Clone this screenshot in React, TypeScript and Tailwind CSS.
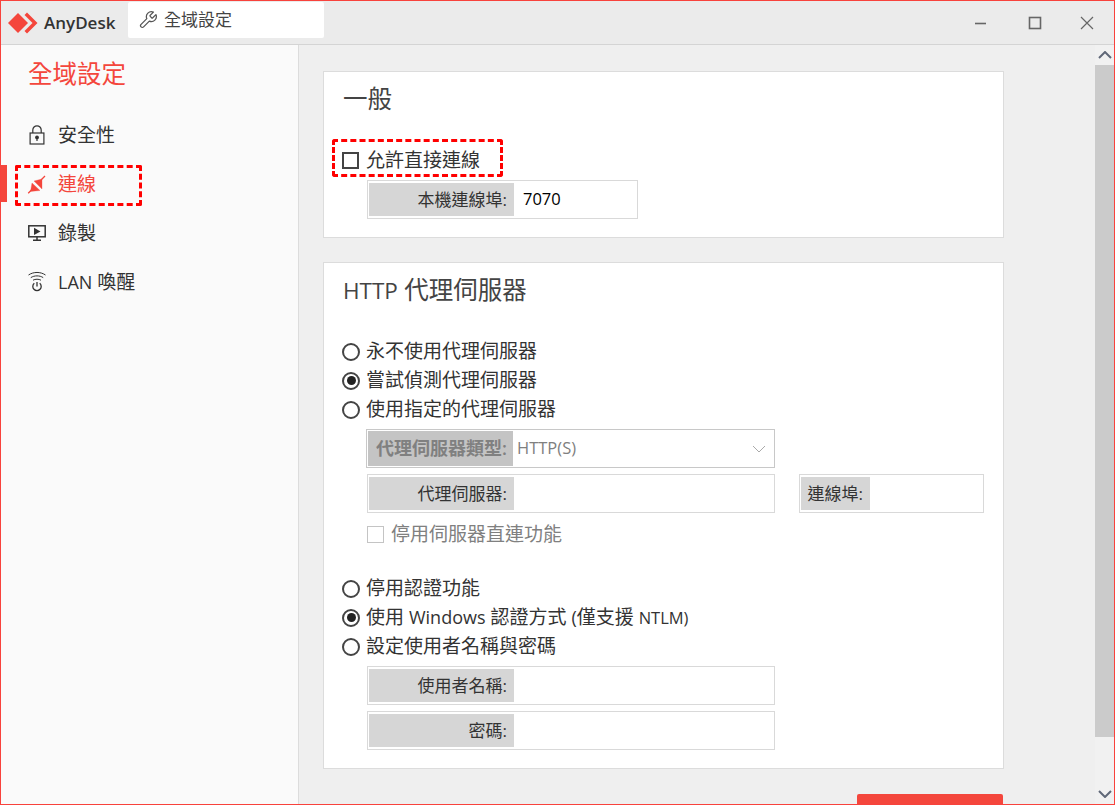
import React from "react";

const font = { fontFamily: '"Open Sans","Noto Sans CJK TC",sans-serif' };

function Latin({ children }: { children: React.ReactNode }) {
  return <span className="text-[18px]">{children}</span>;
}

function Field({ label, value, width, labelW = "w-[145px]" }: { label: string; value?: string; width: string; labelW?: string }) {
  return (
    <div className={`flex h-[39px] items-stretch border border-[#d9d9d9] bg-white py-[2px] pl-[1px] pr-[2px] ${width}`}>
      <div className={`flex shrink-0 items-center justify-end bg-[#d6d6d6] pr-[7px] text-[17px] text-[#333] ${labelW}`}>{label}</div>
      {value && <div className="flex items-center pl-[9px] text-[16.5px] text-black">{value}</div>}
    </div>
  );
}

function Radio({ children, checked }: { children: React.ReactNode; checked?: boolean }) {
  return (
    <div className="flex h-[29px] items-center text-[#333]">
      <span className="-ml-[1px] flex h-[18px] w-[18px] items-center justify-center rounded-full border-2 border-[#444] bg-white">
        {checked && <span className="h-[9px] w-[9px] rounded-full bg-[#222]" />}
      </span>
      <span className="ml-[6px] whitespace-nowrap">{children}</span>
    </div>
  );
}

function NavItem({ icon, children, active }: { icon: React.ReactNode; children: React.ReactNode; active?: boolean }) {
  return (
    <div className={`flex h-[49px] items-center pl-[26px] ${active ? "text-[#f4463c]" : "text-[#333]"}`}>
      <span className="flex w-[20px] items-center justify-center">{icon}</span>
      <span className="ml-[11px] mt-[2px] whitespace-nowrap">{children}</span>
    </div>
  );
}

const Lock = (
  <svg width="16" height="20" viewBox="0 0 16 20" fill="none" stroke="#333" strokeWidth="1.2">
    <rect x="1.1" y="8" width="13.8" height="11" />
    <path d="M3.8 8V5a4.2 4.2 0 0 1 8.4 0v3" />
    <circle cx="8" cy="12.4" r="1.3" fill="#333" />
    <path d="M8 13v3" />
  </svg>
);
const Plug = (
  <svg width="20" height="20" viewBox="0 0 20 20" fill="#f4463c" stroke="#f4463c" strokeWidth="0.3">
    <path d="M5 9l8 7.5-9.5 1z" />
    <path d="M7 7l8 8 0-10z" />
    <path d="M1.2 19.2l3.5-3.5M14 6l4-4" strokeWidth="1.3" fill="none" />
  </svg>
);
const Screen = (
  <svg width="18" height="18" viewBox="0 0 18 18" fill="none" stroke="#333" strokeWidth="1.5">
    <rect x="0.8" y="1.8" width="16.4" height="11" />
    <path d="M6 3.8l6.5 3.6L6 11z" fill="#333" stroke="none" />
    <path d="M9 13v3M5 16.2h8" />
  </svg>
);
const Wake = (
  <svg width="20" height="21" viewBox="0 0 20 21" fill="none" stroke="#333" strokeWidth="1">
    <path d="M1.5 4c5-3.4 12-3.4 17 0" />
    <path d="M3.8 6.6c3.6-2.3 8.8-2.3 12.4 0" />
    <path d="M6 9.2c2.3-1.3 5.7-1.3 8 0" />
    <path d="M7.3 12.2a4.2 4.2 0 1 0 5.4 0" strokeWidth="1.3" />
    <path d="M10 11v4.5" strokeWidth="1.3" />
  </svg>
);

export default function App() {
  return (
    <div style={font} className="flex h-[805px] w-[1115px] flex-col overflow-hidden border border-[#f8423c] bg-[#efefef] text-[19px]">
      <header className="flex h-[44px] shrink-0 items-center border-b border-[#d4d4d4] bg-[#ebebeb]">
        <svg className="ml-[7px]" width="30" height="22" viewBox="0 0 30 22" fill="#f4463c">
          <path d="M0 11L10 1l10 10-10 10z" />
          <path d="M19 0.5L29.5 11 19 21.5 16.5 19l8-8-8-8z" />
        </svg>
        <span className="ml-[6px] w-[84px] text-[17px] font-semibold text-[#333]">AnyDesk</span>
        <div className="mb-[5px] flex h-[36px] w-[196px] items-center rounded-[2px] bg-white pl-[10px]">
          <svg width="20" height="20" viewBox="0 0 24 24" fill="none" stroke="#555" strokeWidth="1.5" strokeLinejoin="round">
            <path d="M14.7 6.3a1 1 0 0 0 0 1.4l1.6 1.6a1 1 0 0 0 1.4 0l3.8-3.8a6 6 0 0 1-7.9 7.9l-6.9 6.9a2.1 2.1 0 0 1-3-3l6.9-6.9a6 6 0 0 1 7.9-7.9z" />
          </svg>
          <span className="ml-[6px] text-[17px] text-[#444]">全域設定</span>
        </div>
        <div className="ml-auto flex items-center text-[#666]">
          <svg width="14" height="14" viewBox="0 0 14 14" stroke="#666" strokeWidth="1.6"><path d="M1 7.5h11" /></svg>
          <svg className="ml-[40px]" width="14" height="14" viewBox="0 0 14 14" fill="none" stroke="#666" strokeWidth="1.6"><rect x="1.5" y="1.5" width="11" height="11" /></svg>
          <svg className="ml-[38px] mr-[20px]" width="14" height="14" viewBox="0 0 14 14" stroke="#666" strokeWidth="1.2"><path d="M1 1l12 12M13 1L1 13" /></svg>
        </div>
      </header>

      <div className="flex min-h-0 flex-1">
        <aside className="relative w-[298px] shrink-0 border-r border-[#dcdcdc] bg-[#fafafa]">
          <div className="ml-[27px] mt-[11px] text-[24.5px] leading-[36px] text-[#f4463c]">全域設定</div>
          <div className="mt-[18px]">
            <NavItem icon={Lock}>安全性</NavItem>
            <NavItem icon={Plug} active>連線</NavItem>
            <NavItem icon={Screen}>錄製</NavItem>
            <NavItem icon={Wake}><Latin>LAN</Latin> 喚醒</NavItem>
          </div>
          <span className="absolute left-0 top-[120px] h-[37px] w-[6px] bg-[#f4463c]" />
          <span className="absolute left-[14px] top-[120px] h-[41px] w-[127px] rounded-[2px] border-[3px] border-dashed border-[#f00]" />
        </aside>

        <main className="relative min-w-0 flex-1 pl-[24px] pt-[26px]">
          <section className="relative h-[167px] w-[681px] border border-[#dcdcdc] bg-white pl-[19px] pt-[10px]">
            <h2 className="text-[24.5px] leading-[34px] font-normal text-[#444]">一般</h2>
            <div className="mt-[30px] flex h-[28px] items-center text-[#333]">
              <span className="-ml-[1px] h-[17px] w-[17px] border-2 border-[#444] bg-white" />
              <span className="ml-[7px]">允許直接連線</span>
            </div>
            <div className="ml-[24px] mt-[6px]">
              <Field label="本機連線埠:" value="7070" width="w-[271px]" />
            </div>
            <span className="absolute left-[8px] top-[67px] h-[38px] w-[171px] rounded-[3px] border-[3px] border-dashed border-[#f00]" />
          </section>

          <section className="mt-[24px] h-[507px] w-[681px] border border-[#dcdcdc] bg-white pl-[19px] pt-[10px]">
            <h2 className="text-[24.5px] leading-[34px] font-normal text-[#444]"><span className="text-[22.5px]">HTTP</span> 代理伺服器</h2>
            <div className="mt-[29px]">
              <Radio>永不使用代理伺服器</Radio>
              <Radio checked>嘗試偵測代理伺服器</Radio>
              <Radio>使用指定的代理伺服器</Radio>
            </div>
            <div className="ml-[23px] mt-[5px] flex h-[39px] w-[409px] items-stretch border border-[#c8c8c8] bg-white p-[1px] pr-[2px]">
              <div className="flex w-[145px] shrink-0 items-center justify-end bg-[#c4c4c4] pr-[6px] text-[18px] font-semibold text-[#808080]">代理伺服器類型:</div>
              <div className="flex flex-1 items-center pl-[4px] pr-[6px] text-[#808080]">
                <span className="text-[16.5px]">HTTP(S)</span>
                <svg className="ml-auto" width="14" height="8" viewBox="0 0 14 8" fill="none" stroke="#aaa" strokeWidth="1"><path d="M1 1l6 6 6-6" /></svg>
              </div>
            </div>
            <div className="ml-[24px] mt-[6px] flex gap-[24px]">
              <Field label="代理伺服器:" width="w-[408px]" />
              <Field label="連線埠:" width="w-[185px]" labelW="w-[69px]" />
            </div>
            <div className="ml-[24px] mt-[7px] flex h-[28px] items-center text-[#808080]">
              <span className="h-[17px] w-[17px] border-[1.5px] border-[#c4c4c4] bg-white" />
              <span className="ml-[7px]">停用伺服器直連功能</span>
            </div>
            <div className="mt-[26px]">
              <Radio>停用認證功能</Radio>
              <Radio checked>使用 <Latin>Windows</Latin> 認證方式 <Latin>(</Latin>僅支援 <span className="text-[16.5px]">NTLM)</span></Radio>
              <Radio>設定使用者名稱與密碼</Radio>
            </div>
            <div className="ml-[24px] mt-[5px] flex flex-col gap-[6px]">
              <Field label="使用者名稱:" width="w-[408px]" />
              <Field label="密碼:" width="w-[408px]" />
            </div>
          </section>

          <div className="ml-[534px] mt-[25px] h-[20px] w-[146px] rounded-t-[2px] bg-[#f4463c]" />

          <div className="absolute bottom-0 right-0 top-0 flex w-[19px] flex-col bg-[#f1f1f1]">
            <div className="flex h-[20px] items-center justify-center">
              <svg width="14" height="8" viewBox="0 0 14 8" fill="none" stroke="#606878" strokeWidth="2"><path d="M1 7l6-6 6 6" /></svg>
            </div>
            <div className="h-[672px] bg-[#cbcbcb]" />
            <div className="mt-auto flex h-[20px] items-center justify-center">
              <svg width="14" height="8" viewBox="0 0 14 8" fill="none" stroke="#606878" strokeWidth="2"><path d="M1 1l6 6 6-6" /></svg>
            </div>
          </div>
        </main>
      </div>
    </div>
  );
}
